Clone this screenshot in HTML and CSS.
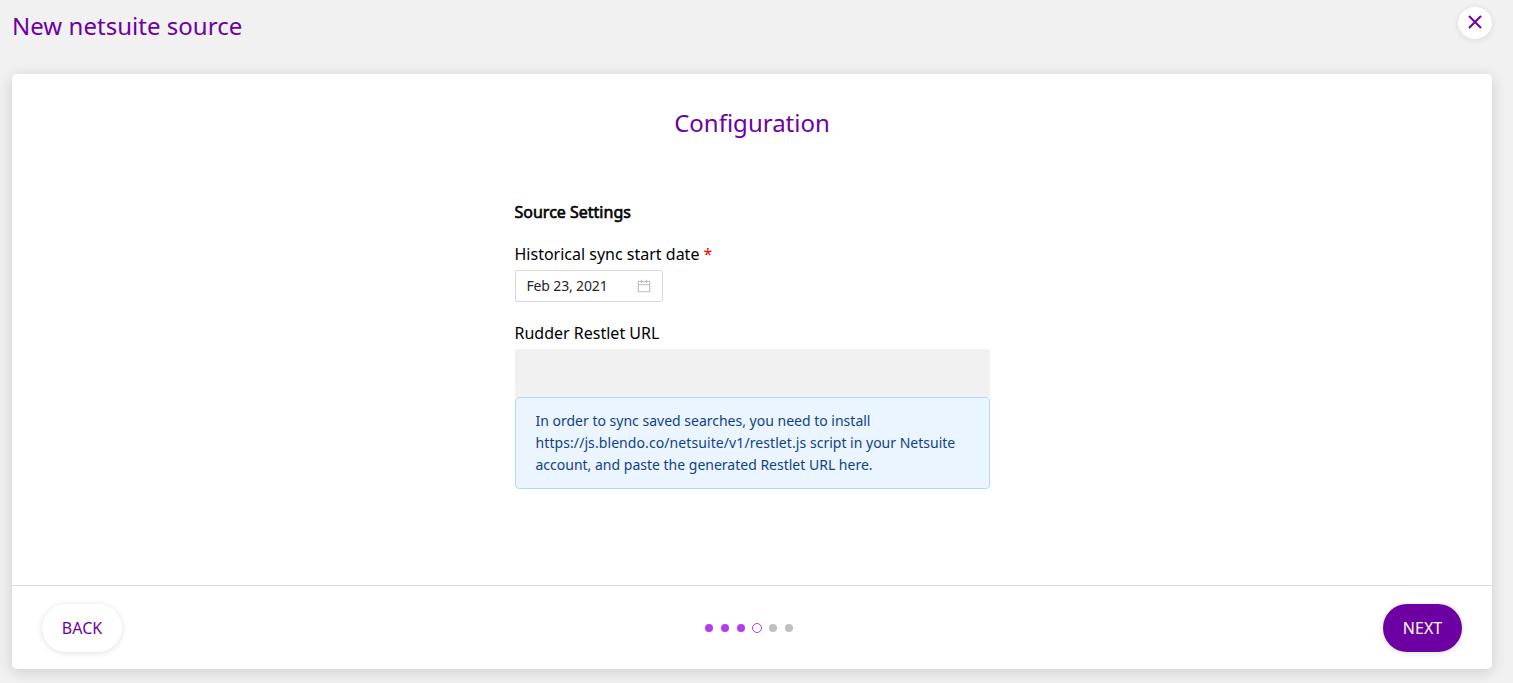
FILE: index.html
```html
<!DOCTYPE html>
<html lang="en">
<head>
<meta charset="utf-8">
<title>New netsuite source</title>
<link rel="stylesheet" href="styles.css">
</head>
<body>
<header class="header">
  <h1 class="title">New netsuite source</h1>
  <button class="close" aria-label="Close">
    <svg width="14" height="14" viewBox="0 0 14 14" fill="none" stroke="currentColor" stroke-width="2"><path d="M1 1l12 12M13 1L1 13"/></svg>
  </button>
</header>
<main class="card">
  <section class="content">
    <h2 class="heading">Configuration</h2>
    <form class="form">
      <h3 class="group">Source Settings</h3>
      <label class="label">Historical sync start date <span class="required">*</span></label>
      <div class="date">
        <span>Feb 23, 2021</span>
        <svg width="14" height="14" viewBox="64 64 896 896" fill="currentColor"><path d="M880 184H712v-64c0-4.400-3.600-8-8-8h-56c-4.400 0-8 3.600-8 8v64H384v-64c0-4.400-3.600-8-8-8h-56c-4.400 0-8 3.600-8 8v64H144c-17.700 0-32 14.300-32 32v664c0 17.700 14.300 32 32 32h736c17.700 0 32-14.300 32-32V216c0-17.700-14.300-32-32-32zm-40 656H184V460h656v380zM184 392V256h128v48c0 4.400 3.600 8 8 8h56c4.400 0 8-3.600 8-8v-48h256v48c0 4.400 3.600 8 8 8h56c4.400 0 8-3.600 8-8v-48h128v136H184z"/></svg>
      </div>
      <label class="label">Rudder Restlet URL</label>
      <div class="input"></div>
      <div class="note">In order to sync saved searches, you need to install <span class="url">https://js.blendo.co/netsuite/v1/restlet.js</span> script in your Netsuite account, and paste the generated Restlet URL here.</div>
    </form>
  </section>
  <footer class="footer">
    <button class="button back">BACK</button>
    <div class="steps">
      <i class="dot done"></i><i class="dot done"></i><i class="dot done"></i><i class="dot current"></i><i class="dot"></i><i class="dot"></i>
    </div>
    <button class="button next">NEXT</button>
  </footer>
</main>
</body>
</html>
```

FILE: styles.css
```css
* { box-sizing: border-box; }
body {
  margin: 0;
  height: 683px;
  overflow: hidden;
  padding: 0 21px 0 12px;
  background: #f1f1f1;
  color: #000;
  font-family: "Noto Sans", sans-serif;
  font-size: 16px;
}
h1, h2, h3 { margin: 0; font-weight: 400; }
button { border: 0; padding: 0; font: inherit; }
.header {
  display: flex;
  justify-content: space-between;
  align-items: flex-start;
  height: 74px;
  padding-top: 7px;
}
.title { color: #6d00a2; font-size: 24px; line-height: 38px; letter-spacing: .03px; }
.close {
  display: flex;
  justify-content: center;
  width: 34px;
  height: 32px;
  padding-top: 8px;
  border-radius: 50%;
  background: #fff;
  color: #6d00a2;
  box-shadow: 0 1px 6px rgba(0, 0, 0, .1);
}
.card {
  display: flex;
  flex-direction: column;
  height: 595px;
  border-radius: 5px;
  background: #fff;
  box-shadow: 0 3px 15px rgba(0, 0, 0, .15);
}
.content { flex: 1; padding-top: 30px; }
.heading {
  color: #6d00a2;
  font-size: 24px;
  line-height: 38px;
  text-align: center;
}
.form { width: 475px; margin: 58px auto 0; }
.group {
  margin-bottom: 17px;
  font-size: 16px;
  line-height: 25px;
  -webkit-text-stroke: .6px #000;
}
.label { display: block; line-height: 25px; }
.required { color: #f00; }
.date {
  display: flex;
  align-items: center;
  justify-content: space-between;
  width: 148px;
  height: 32px;
  margin: 3px 0 19px;
  padding: 0 11px;
  border: 1px solid #d9d9d9;
  border-radius: 2px;
  color: #bfbfbf;
  font-size: 14px;
}
.date span { padding-bottom: 2px; color: #262626; letter-spacing: -.15px; }
.input { height: 48px; margin-top: 3px; border-radius: 2px; background: #f1f1f1; }
.note {
  height: 92px;
  padding: 12px 20px;
  border: 1px solid #b3d8ff;
  border-radius: 4px;
  background: #ebf5ff;
  color: #0f4187;
  font-size: 14px;
  line-height: 22px;
}
.url { letter-spacing: .085px; }
.footer {
  display: flex;
  align-items: center;
  justify-content: space-between;
  height: 84px;
  padding: 1px 30px 0;
  border-top: 1px solid #dedede;
}
.button { height: 48px; border-radius: 24px; box-shadow: 0 1px 6px rgba(0, 0, 0, .13); }
.back { width: 80px; background: #fff; color: #6d00a2; }
.next { width: 79px; background: #6d00a2; color: #fff; }
.steps { display: flex; align-items: center; gap: 8px; margin-right: 7px; }
.dot { width: 8px; height: 8px; border-radius: 50%; background: #bfbfbf; }
.done { background: #b23af5; }
.current { width: 10px; height: 10px; margin: 0 -1px; border: 1px solid #b23af5; background: #fff; }
```
